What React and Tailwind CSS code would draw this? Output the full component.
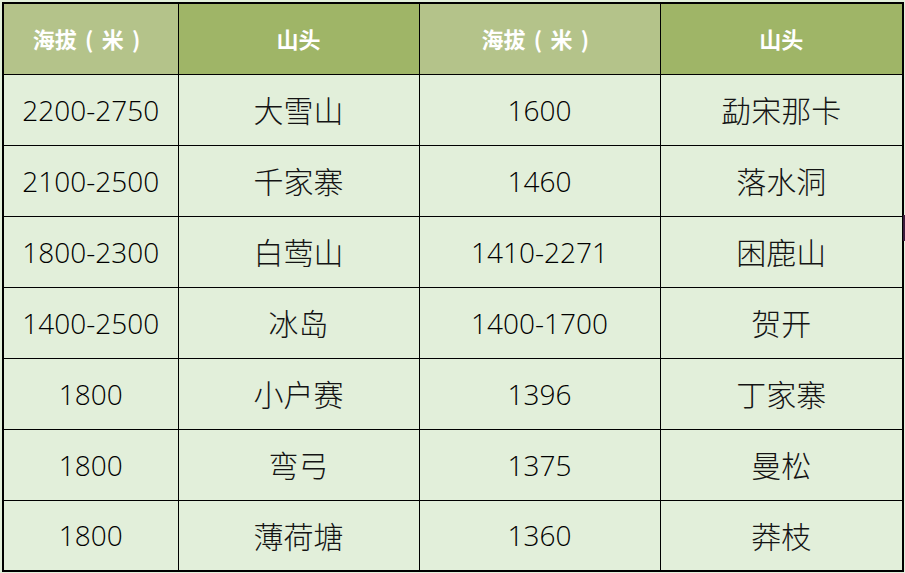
import React from "react";

const rows = [
  ["2200-2750", "大雪山", "1600", "勐宋那卡"],
  ["2100-2500", "千家寨", "1460", "落水洞"],
  ["1800-2300", "白莺山", "1410-2271", "困鹿山"],
  ["1400-2500", "冰岛", "1400-1700", "贺开"],
  ["1800", "小户赛", "1396", "丁家寨"],
  ["1800", "弯弓", "1375", "曼松"],
  ["1800", "薄荷塘", "1360", "莽枝"],
];

const num = { fontFamily: '"Open Sans", "Noto Sans", sans-serif' };
const cjk = { fontFamily: '"Noto Sans CJK SC", "Noto Sans", sans-serif' };

function Head() {
  return (
    <span className="inline-flex items-center">
      <span>海拔</span>
      <span className="inline-block w-[25px] text-center">(</span>
      <span>米</span>
      <span className="inline-block w-[25px] text-center">)</span>
    </span>
  );
}

export default function App() {
  const th = "border border-black text-white text-[22px] font-bold text-center align-middle";
  return (
    <div className="relative w-[905px] h-[573px] overflow-hidden bg-[#e2efda] pt-[2px] pl-[2px]">
      <table className="border-collapse border-2 border-black table-fixed w-[900px]">
        <colgroup>
          <col className="w-[175px]" />
          <col className="w-[241px]" />
          <col className="w-[241px]" />
          <col className="w-[243px]" />
        </colgroup>
        <thead>
          <tr className="h-[71px]">
            <th className={th + " bg-[#b4c38a]"} style={cjk}><Head /></th>
            <th className={th + " bg-[#9fb567]"} style={cjk}>山头</th>
            <th className={th + " bg-[#b4c38a]"} style={cjk}><Head /></th>
            <th className={th + " bg-[#9fb567]"} style={cjk}>山头</th>
          </tr>
        </thead>
        <tbody>
          {rows.map((r, i) => (
            <tr key={i} className="h-[71px]">
              <td className="border border-black text-center align-middle text-[28px] font-light text-black" style={num}>{r[0]}</td>
              <td className="border border-black text-center align-middle text-[30px] font-light text-[#141414]" style={cjk}>{r[1]}</td>
              <td className="border border-black text-center align-middle text-[28px] font-light text-black" style={num}>{r[2]}</td>
              <td className="border border-black text-center align-middle text-[30px] font-light text-[#141414]" style={cjk}>{r[3]}</td>
            </tr>
          ))}
        </tbody>
      </table>
      <div className="absolute left-[903px] top-[215px] w-[2px] h-[26px] bg-[#3b1b3b]" />
    </div>
  );
}
